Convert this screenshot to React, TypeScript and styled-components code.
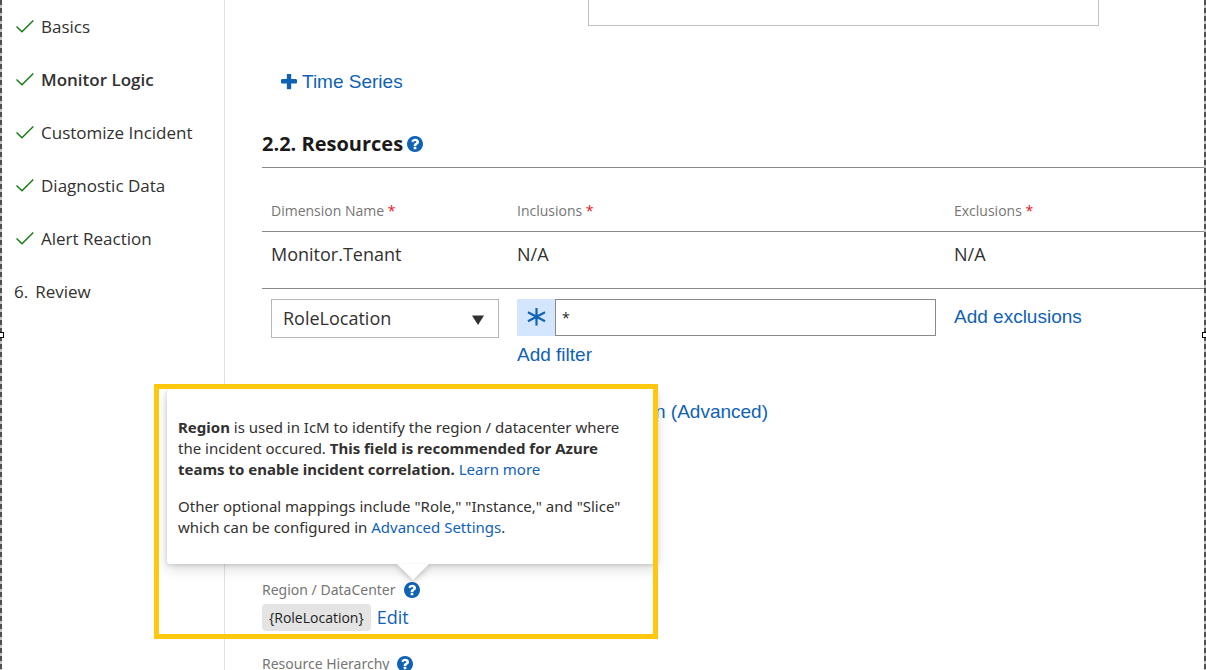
import React from "react";
import styled, { createGlobalStyle, css } from "styled-components";

const ui = `"Open Sans", "Noto Sans", sans-serif`;
const arial = `"Liberation Sans", Arial, sans-serif`;
const blue = "#0f62b4";
const ink = "#323130";

const GlobalStyle = createGlobalStyle`
  *, *::before, *::after { box-sizing: border-box; }
  body {
    margin: 0;
    background: #fff;
    color: ${ink};
    font-family: ${ui};
    overflow: hidden;
  }
`;

const Page = styled.div`
  position: relative;
  display: flex;
  height: 100vh;
  overflow: hidden;
`;

const EdgeMarks = styled.div<{ $side: "left" | "right" }>`
  position: absolute;
  top: 0;
  bottom: 0;
  width: 2px;
  ${(p) => p.$side}: 0;
  background: repeating-linear-gradient(#505050 0 5px, #c4c4c4 5px 8px);
  &::after {
    content: "";
    position: absolute;
    top: 50%;
    margin-top: -3px;
    ${(p) => p.$side}: -2px;
    width: 6px;
    height: 6px;
    border: 1px solid #000;
    background: #fff;
  }
`;

const Sidebar = styled.nav`
  flex: none;
  width: 225px;
  border-right: 1px solid #e1e1e1;
`;

const Steps = styled.ol`
  margin: 0;
  padding: 0 0 0 14px;
  list-style: none;
`;

const Step = styled.li`
  height: 53px;
  display: flex;
  align-items: center;
`;

const StepLink = styled.a<{ $current?: boolean }>`
  display: flex;
  align-items: center;
  gap: 7px;
  color: ${ink};
  text-decoration: none;
  font-size: 17px;
  line-height: 24px;
  font-weight: ${(p) => (p.$current ? 600 : 400)};
`;

const Main = styled.main`
  flex: 1;
  min-width: 0;
  padding: 0 2px 0 37px;
`;

const TopField = styled.div`
  display: flex;
  padding: 0 105px 0 326px;
`;

const TextArea = styled.textarea`
  flex: 1;
  min-width: 0;
  height: 26px;
  resize: none;
  border: 1px solid #c0c0c0;
  border-top: 0;
  outline: none;
`;

const action = css`
  padding: 0;
  border: 0;
  background: none;
  color: ${blue};
  font-family: ${arial};
  font-size: 19px;
  line-height: 24px;
  text-decoration: none;
  cursor: pointer;
`;

const ActionButton = styled.button`
  ${action}
  display: flex;
  align-items: center;
  gap: 5px;
  white-space: nowrap;
`;

const EditButton = styled.button`
  ${action}
  font-family: ${ui};
  font-size: 18px;
`;

const TimeSeriesRow = styled.div`
  padding: 44px 0 0 19px;
`;

const SectionTitle = styled.h2`
  display: flex;
  align-items: center;
  gap: 4px;
  margin: 34px 0 0;
  padding-bottom: 7px;
  border-bottom: 1px solid #8a8a8a;
  height: 40px;
  color: #1b1a19;
  font-size: 20px;
  line-height: 32px;
  font-weight: 700;
`;

const HelpButton = styled.button`
  display: flex;
  padding: 0;
  border: 0;
  background: none;
  color: ${blue};
`;

const Table = styled.table`
  width: 100%;
  table-layout: fixed;
  border-collapse: collapse;
`;

const Col = styled.col<{ $w?: number }>`
  width: ${(p) => (p.$w ? `${p.$w}px` : "auto")};
`;

const HeadCell = styled.th`
  height: 63px;
  padding: 23px 9px 0;
  border-bottom: 1px solid #8a8a8a;
  color: #767676;
  font-size: 14px;
  line-height: 20px;
  font-weight: 400;
  text-align: left;
`;

const Required = styled.span`
  color: #e81123;
`;

const Cell = styled.td`
  height: 57px;
  padding: 9px 9px 0;
  border-bottom: 1px solid #8a8a8a;
  vertical-align: top;
  font-size: 18px;
  line-height: 26px;
`;

const EditCell = styled.td`
  padding: 10px 9px 0;
  vertical-align: top;
`;

const SelectBox = styled.div`
  position: relative;
  display: flex;
`;

const Select = styled.select`
  appearance: none;
  width: 100%;
  height: 39px;
  padding: 0 32px 0 11px;
  border: 1px solid #b8b8b8;
  border-radius: 0;
  background: #fff;
  color: ${ink};
  font-family: ${ui};
  font-size: 18px;
`;

const SelectArrow = styled.svg`
  position: absolute;
  top: 16px;
  right: 15px;
  width: 12px;
  height: 10px;
  pointer-events: none;
`;

const FilterRow = styled.div`
  display: flex;
  height: 37px;
  margin-bottom: 7px;
`;

const OperatorButton = styled.button`
  display: flex;
  align-items: center;
  justify-content: center;
  width: 38px;
  padding: 0;
  border: 0;
  background: #d4e6fd;
`;

const FilterInput = styled.input`
  flex: 1;
  min-width: 0;
  padding: 0 6px;
  border: 1px solid #8a8a8a;
  outline: none;
  color: #201f1e;
  font-family: ${ui};
  font-size: 14px;
`;

const ExclusionLine = styled.div`
  padding-top: 6px;
`;

const AdvancedRow = styled.div`
  padding: 33px 0 0 393px;
`;

const Field = styled.section`
  position: relative;
  display: flex;
  flex-direction: column;
  gap: 2px;
`;

const RegionField = styled(Field)`
  margin-top: 154px;
`;

const HierarchyField = styled(Field)`
  margin-top: 21px;
`;

const FieldLabel = styled.div`
  display: flex;
  align-items: center;
  gap: 8px;
  color: #767676;
  font-family: "Noto Sans", sans-serif;
  font-size: 14px;
  line-height: 24px;
`;

const FieldValue = styled.div`
  display: flex;
  align-items: center;
  gap: 6px;
`;

const Token = styled.code`
  height: 27px;
  padding: 0 7px;
  border-radius: 4px;
  background: #e4e4e4;
  color: #201f1e;
  font-family: ${ui};
  font-size: 14px;
  line-height: 27px;
`;

const Callout = styled.div`
  position: absolute;
  left: -95px;
  bottom: 67px;
  width: 490px;
  padding: 28px 26px 26px 11px;
  border-radius: 3px;
  background: #fff;
  box-shadow: 0 5px 14px rgba(0, 0, 0, 0.14), 0 1px 4px rgba(0, 0, 0, 0.16);
  color: ${ink};
  font-family: "Noto Sans", sans-serif;
  font-size: 15px;
  line-height: 21px;
  z-index: 1;
`;

const CalloutText = styled.p`
  margin: 0 0 16px;
  &:last-of-type { margin-bottom: 0; }
`;

const CalloutLink = styled.a`
  color: ${blue};
  text-decoration: none;
`;

const Beak = styled.svg`
  position: absolute;
  left: 230px;
  top: 100%;
  width: 32px;
  height: 17px;
  overflow: visible;
  filter: drop-shadow(0 2px 3px rgba(0, 0, 0, 0.25));
  clip-path: inset(0 -10px -10px -10px);
`;

const Highlight = styled.div`
  position: absolute;
  left: -108px;
  top: -194px;
  width: 504px;
  height: 255px;
  border: 5px solid #ffc80e;
  z-index: 2;
  pointer-events: none;
`;

const CheckMark = () => (
  <svg width="20" height="16" viewBox="0 0 20 16" fill="none" aria-hidden="true">
    <path d="M2.5 7.4 8 12.8 19.3 1.6" stroke="#107c10" strokeWidth="1.4" />
  </svg>
);

const AsteriskIcon = () => (
  <svg width="20" height="20" viewBox="0 0 20 20" fill="none" aria-hidden="true">
    <path
      d="M10.5 1v17.5M2 5.2l17 9M2 14.2l17-9"
      stroke={blue}
      strokeWidth="2.2"
    />
  </svg>
);

const PlusIcon = () => (
  <svg width="16" height="16" viewBox="192 192 1408 1408" fill="currentColor" aria-hidden="true">
    <path d="M1600 736v192q0 40-28 68t-68 28h-416v416q0 40-28 68t-68 28h-192q-40 0-68-28t-28-68v-416h-416q-40 0-68-28t-28-68v-192q0-40 28-68t68-28h416v-416q0-40 28-68t68-28h192q40 0 68 28t28 68v416h416q40 0 68 28t28 68z" />
  </svg>
);

const Help = ({ label }: { label: string }) => (
  <HelpButton type="button" aria-label={label}>
    <svg width="16" height="16" viewBox="128 128 1536 1536" fill="currentColor" aria-hidden="true">
      <path d="M1024 1376v-192q0-14-9-23t-23-9h-192q-14 0-23 9t-9 23v192q0 14 9 23t23 9h192q14 0 23-9t9-23zm256-672q0-88-55.5-163t-138.5-116-170-41q-243 0-371 213-15 24 8 42l132 100q7 6 19 6 16 0 25-12 53-68 86-92 34-24 86-24 48 0 85.5 26t37.5 59q0 38-20 61t-68 45q-63 28-115.5 86.5t-52.5 125.5v36q0 14 9 23t23 9h192q14 0 23-9t9-23q0-19 21.5-49.5t54.5-49.5q32-18 49-28.5t46-35 44.5-48 28-60.5 12.5-81zm384 192q0 209-103 385.5t-279.5 279.5-385.5 103-385.5-103-279.5-279.5-103-385.5 103-385.5 279.5-279.5 385.5-103 385.5 103 279.5 279.5 103 385.5z" />
    </svg>
  </HelpButton>
);

const steps = ["Basics", "Monitor Logic", "Customize Incident", "Diagnostic Data", "Alert Reaction"];
const columns = ["Dimension Name", "Inclusions", "Exclusions"];

export default function App() {
  return (
    <Page>
      <GlobalStyle />
      <Sidebar aria-label="Steps">
        <Steps>
          {steps.map((s) => (
            <Step key={s}>
              <StepLink href="#" $current={s === "Monitor Logic"}>
                <CheckMark />
                {s}
              </StepLink>
            </Step>
          ))}
          <Step>
            <StepLink href="#">
              <span>6.</span>
              Review
            </StepLink>
          </Step>
        </Steps>
      </Sidebar>

      <Main>
        <TopField>
          <TextArea aria-label="Time series expression" />
        </TopField>
        <TimeSeriesRow>
          <ActionButton type="button">
            <PlusIcon />
            Time Series
          </ActionButton>
        </TimeSeriesRow>

        <SectionTitle>
          2.2. Resources
          <Help label="About resources" />
        </SectionTitle>

        <Table>
          <colgroup>
            <Col $w={246} />
            <Col $w={437} />
            <Col />
          </colgroup>
          <thead>
            <tr>
              {columns.map((c) => (
                <HeadCell key={c} scope="col">
                  {c} <Required>*</Required>
                </HeadCell>
              ))}
            </tr>
          </thead>
          <tbody>
            <tr>
              <Cell>Monitor.Tenant</Cell>
              <Cell>N/A</Cell>
              <Cell>N/A</Cell>
            </tr>
            <tr>
              <EditCell>
                <SelectBox>
                  <Select aria-label="Dimension name" defaultValue="RoleLocation">
                    <option>RoleLocation</option>
                  </Select>
                  <SelectArrow viewBox="0 0 12 10" aria-hidden="true">
                    <path d="M0 0.5h12L6 10z" fill={ink} />
                  </SelectArrow>
                </SelectBox>
              </EditCell>
              <EditCell>
                <FilterRow>
                  <OperatorButton type="button" aria-label="Match operator">
                    <AsteriskIcon />
                  </OperatorButton>
                  <FilterInput aria-label="Inclusion filter" defaultValue="*" />
                </FilterRow>
                <ActionButton type="button">Add filter</ActionButton>
              </EditCell>
              <EditCell>
                <ExclusionLine>
                  <ActionButton type="button">Add exclusions</ActionButton>
                </ExclusionLine>
              </EditCell>
            </tr>
          </tbody>
        </Table>

        <AdvancedRow>
          <ActionButton type="button">n (Advanced)</ActionButton>
        </AdvancedRow>

        <RegionField>
          <FieldLabel>
            Region / DataCenter
            <Help label="About region" />
          </FieldLabel>
          <FieldValue>
            <Token>{"{RoleLocation}"}</Token>
            <EditButton type="button">Edit</EditButton>
          </FieldValue>
          <Callout role="tooltip">
            <CalloutText>
              <b>Region</b> is used in IcM to identify the region / datacenter where the incident
              occured. <b>This field is recommended for Azure teams to enable incident correlation.</b>{" "}
              <CalloutLink href="#">Learn more</CalloutLink>
            </CalloutText>
            <CalloutText>
              Other optional mappings include "Role," "Instance," and "Slice" which can be
              configured in <CalloutLink href="#">Advanced Settings</CalloutLink>.
            </CalloutText>
            <Beak viewBox="0 0 32 17" aria-hidden="true">
              <path d="M0 0h32L16 16z" fill="#fff" />
            </Beak>
          </Callout>
          <Highlight />
        </RegionField>

        <HierarchyField>
          <FieldLabel>
            Resource Hierarchy
            <Help label="About resource hierarchy" />
          </FieldLabel>
        </HierarchyField>
      </Main>

      <EdgeMarks $side="left" />
      <EdgeMarks $side="right" />
    </Page>
  );
}
